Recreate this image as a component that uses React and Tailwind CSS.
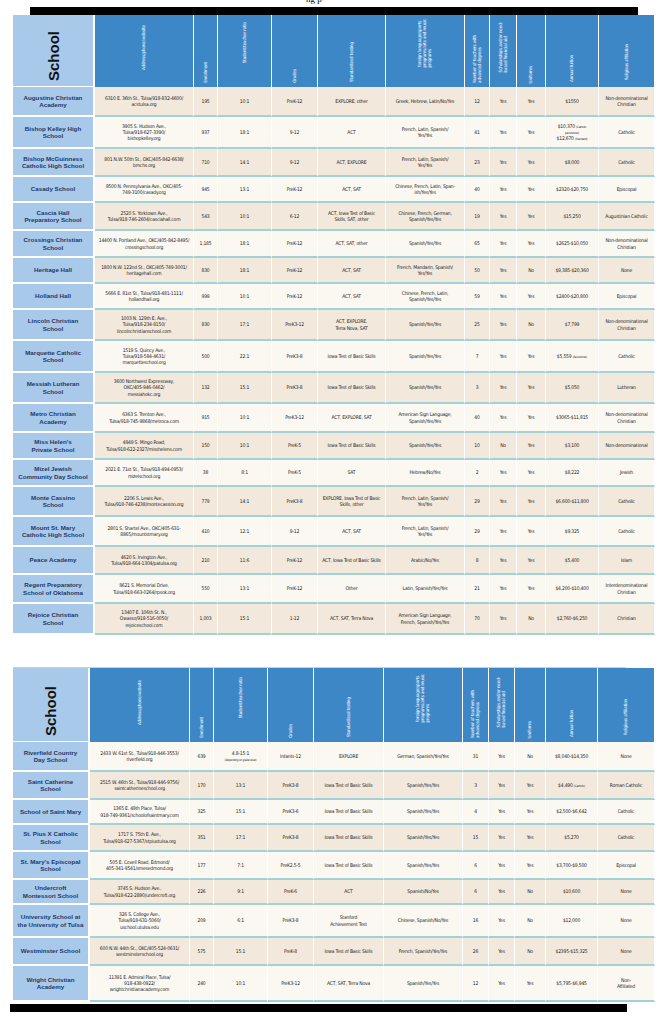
import React from "react";

const C = "bg-[#f2e9dc]";
const L = "bg-[#fbf8f2]";

const T1 = [
  { h: "h-[30px]", bg: C, name: "Augustine Christian\nAcademy", addr: "6310 E. 36th St., Tulsa/918-832-4600/\nacstulsa.org", en: "195", r: "10:1", g: "PreK-12", t: "EXPLORE, other", f: "Greek, Hebrew, Latin/No/Yes", n: "12", s: "Yes", u: "Yes", tu: "$1550", rel: "Non-denominational\nChristian" },
  { h: "h-[32px]", bg: L, name: "Bishop Kelley High\nSchool", addr: "3905 S. Hudson Ave.,\nTulsa/918-627-3390/\nbishopkelley.org", en: "937", r: "18:1", g: "9-12", t: "ACT", f: "French, Latin, Spanish/\nYes/Yes", n: "41", s: "Yes", u: "Yes", tu: "kelley", rel: "Catholic" },
  { h: "h-[28px]", bg: C, name: "Bishop McGuinness\nCatholic High School", addr: "801 N.W. 50th St., OKC/405-842-6638/\nbmchs.org", en: "710", r: "14:1", g: "9-12", t: "ACT, EXPLORE", f: "French, Latin, Spanish/\nYes/Yes", n: "23", s: "Yes", u: "Yes", tu: "$8,000", rel: "Catholic" },
  { h: "h-[26px]", bg: L, name: "Casady School", addr: "9500 N. Pennsylvania Ave., OKC/405-\n749-3100/casady.org", en: "945", r: "13:1", g: "PreK-12", t: "ACT, SAT", f: "Chinese, French, Latin, Span-\nish/Yes/Yes", n: "40", s: "Yes", u: "Yes", tu: "$2320-$20,750", rel: "Episcopal" },
  { h: "h-[28px]", bg: C, name: "Cascia Hall\nPreparatory School", addr: "2520 S. Yorktown Ave.,\nTulsa/918-746-2604/casciahall.com", en: "543", r: "10:1", g: "6-12", t: "ACT, Iowa Test of Basic\nSkills, SAT, other", f: "Chinese, French, German,\nSpanish/Yes/Yes", n: "19", s: "Yes", u: "Yes", tu: "$15,250", rel: "Augustinian Catholic" },
  { h: "h-[27px]", bg: L, name: "Crossings Christian\nSchool", addr: "14400 N. Portland Ave., OKC/405-842-8495/\ncrossingschool.org", en: "1,185", r: "18:1", g: "PreK-12", t: "ACT, SAT, other", f: "Spanish/Yes/Yes", n: "65", s: "Yes", u: "Yes", tu: "$2625-$10,050", rel: "Non-denominational\nChristian" },
  { h: "h-[26px]", bg: C, name: "Heritage Hall", addr: "1800 N.W. 122nd St., OKC/405-749-3001/\nheritagehall.com", en: "830", r: "18:1", g: "PreK-12", t: "ACT, SAT", f: "French, Mandarin, Spanish/\nYes/Yes", n: "50", s: "Yes", u: "No", tu: "$9,385-$20,360", rel: "None" },
  { h: "h-[26px]", bg: L, name: "Holland Hall", addr: "5666 E. 81st St., Tulsa/918-481-1111/\nhollandhall.org", en: "999", r: "10:1", g: "PreK-12", t: "ACT, SAT", f: "Chinese, French, Latin,\nSpanish/Yes/Yes", n: "59", s: "Yes", u: "Yes", tu: "$2400-$20,800", rel: "Episcopal" },
  { h: "h-[31px]", bg: C, name: "Lincoln Christian\nSchool", addr: "1003 N. 129th E. Ave.,\nTulsa/918-234-8150/\nlincolnchristianschool.com", en: "830", r: "17:1", g: "PreK3-12", t: "ACT, EXPLORE,\nTerra Nova, SAT", f: "Spanish/Yes/Yes", n: "25", s: "Yes", u: "No", tu: "$7,799", rel: "Non-denominational\nChristian" },
  { h: "h-[32px]", bg: L, name: "Marquette Catholic\nSchool", addr: "1519 S. Quincy Ave.,\nTulsa/918-584-4631/\nmarquetteschool.org", en: "500", r: "22:1", g: "PreK3-8", t: "Iowa Test of Basic Skills", f: "Spanish/Yes/Yes", n: "7", s: "Yes", u: "Yes", tu: "marquette", rel: "Catholic" },
  { h: "h-[31px]", bg: C, name: "Messiah Lutheran\nSchool", addr: "3600 Northwest Expressway,\nOKC/405-946-0462/\nmessiahokc.org", en: "132", r: "15:1", g: "PreK3-8", t: "Iowa Test of Basic Skills", f: "Spanish/Yes/Yes", n: "3", s: "Yes", u: "Yes", tu: "$5,050", rel: "Lutheran" },
  { h: "h-[29px]", bg: L, name: "Metro Christian\nAcademy", addr: "6363 S. Trenton Ave.,\nTulsa/918-745-9868/metroca.com", en: "915", r: "10:1", g: "PreK3-12", t: "ACT, EXPLORE, SAT", f: "American Sign Language,\nSpanish/Yes/Yes", n: "40", s: "Yes", u: "Yes", tu: "$3065-$11,815", rel: "Non-denominational\nChristian" },
  { h: "h-[27px]", bg: C, name: "Miss Helen's\nPrivate School", addr: "4949 S. Mingo Road,\nTulsa/918-622-2327/misshelens.com", en: "150", r: "10:1", g: "PreK-5", t: "Iowa Test of Basic Skills", f: "Spanish/Yes/Yes", n: "10", s: "No", u: "Yes", tu: "$3,100", rel: "Non-denominational" },
  { h: "h-[27px]", bg: L, name: "Mizel Jewish\nCommunity Day School", addr: "2021 E. 71st St., Tulsa/918-494-0953/\nmizelschool.org", en: "38", r: "8:1", g: "PreK-5", t: "SAT", f: "Hebrew/No/Yes", n: "2", s: "Yes", u: "Yes", tu: "$8,222", rel: "Jewish" },
  { h: "h-[30px]", bg: C, name: "Monte Cassino\nSchool", addr: "2206 S. Lewis Ave.,\nTulsa/918-746-4238/montecassino.org", en: "779", r: "14:1", g: "PreK3-8", t: "EXPLORE, Iowa Test of Basic\nSkills, other", f: "French, Latin, Spanish/\nYes/Yes", n: "29", s: "Yes", u: "Yes", tu: "$6,600-$11,800", rel: "Catholic" },
  { h: "h-[30px]", bg: L, name: "Mount St. Mary\nCatholic High School", addr: "2801 S. Shartel Ave., OKC/405-631-\n8865/mountstmary.org", en: "410", r: "12:1", g: "9-12", t: "ACT, SAT", f: "French, Latin, Spanish/\nYes/Yes", n: "29", s: "Yes", u: "Yes", tu: "$9,325", rel: "Catholic" },
  { h: "h-[28px]", bg: C, name: "Peace Academy", addr: "4620 S. Irvington Ave.,\nTulsa/918-664-1304/patulsa.org", en: "210", r: "11:6", g: "PreK-12", t: "ACT, Iowa Test of Basic Skills", f: "Arabic/No/Yes", n: "8", s: "Yes", u: "Yes", tu: "$5,400", rel: "Islam" },
  { h: "h-[29px]", bg: L, name: "Regent Preparatory\nSchool of Oklahoma", addr: "8621 S. Memorial Drive,\nTulsa/918-663-0264/rpsok.org", en: "550", r: "13:1", g: "PreK-12", t: "Other", f: "Latin, Spanish/Yes/Yes", n: "21", s: "Yes", u: "Yes", tu: "$4,200-$10,400", rel: "Interdenominational\nChristian" },
  { h: "h-[31px]", bg: C, name: "Rejoice Christian\nSchool", addr: "13407 E. 106th St. N.,\nOwasso/918-516-0050/\nrejoiceschool.com", en: "1,003", r: "15:1", g: "1-12", t: "ACT, SAT, Terra Nova", f: "American Sign Language,\nFrench, Spanish/Yes/Yes", n: "70", s: "Yes", u: "No", tu: "$2,760-$6,250", rel: "Christian" },
];

const T2 = [
  { h: "h-[30px]", bg: L, name: "Riverfield Country\nDay School", addr: "2433 W. 61st St., Tulsa/918-446-3553/\nriverfield.org", en: "639", r: "river", g: "Infants-12", t: "EXPLORE", f: "German, Spanish/Yes/Yes", n: "31", s: "Yes", u: "No", tu: "$8,040-$14,350", rel: "None" },
  { h: "h-[28px]", bg: C, name: "Saint Catherine\nSchool", addr: "2515 W. 46th St., Tulsa/918-446-9756/\nsaintcatherineschool.org", en: "170", r: "13:1", g: "PreK3-8", t: "Iowa Test of Basic Skills", f: "Spanish/Yes/Yes", n: "3", s: "Yes", u: "Yes", tu: "catherine", rel: "Roman Catholic" },
  { h: "h-[25px]", bg: L, name: "School of Saint Mary", addr: "1365 E. 49th Place, Tulsa/\n918-749-9361/schoolofsaintmary.com", en: "325", r: "15:1", g: "PreK3-6", t: "Iowa Test of Basic Skills", f: "Spanish/Yes/Yes", n: "4", s: "Yes", u: "Yes", tu: "$2,500-$6,642", rel: "Catholic" },
  { h: "h-[27px]", bg: C, name: "St. Pius X Catholic\nSchool", addr: "1717 S. 75th E. Ave.,\nTulsa/918-627-5367/stpiustulsa.org", en: "351", r: "17:1", g: "PreK3-8", t: "Iowa Test of Basic Skills", f: "Spanish/Yes/Yes", n: "15", s: "Yes", u: "Yes", tu: "$5,270", rel: "Catholic" },
  { h: "h-[28px]", bg: L, name: "St. Mary's Episcopal\nSchool", addr: "505 E. Covell Road, Edmond/\n405-341-9541/smesedmond.org", en: "177", r: "7:1", g: "PreK2.5-5", t: "Iowa Test of Basic Skills", f: "Spanish/Yes/Yes", n: "6", s: "Yes", u: "Yes", tu: "$3,700-$9,500", rel: "Episcopal" },
  { h: "h-[25px]", bg: C, name: "Undercroft\nMontessori School", addr: "3745 S. Hudson Ave.,\nTulsa/918-622-2890/undercroft.org", en: "226", r: "9:1", g: "PreK-6", t: "ACT", f: "Spanish/No/Yes", n: "6", s: "Yes", u: "No", tu: "$10,600", rel: "None" },
  { h: "h-[33px]", bg: L, name: "University School at\nthe University of Tulsa", addr: "326 S. College Ave.,\nTulsa/918-631-5060/\nuschool.utulsa.edu", en: "209", r: "6:1", g: "PreK3-8", t: "Stanford\nAchievement Test", f: "Chinese, Spanish/No/Yes", n: "16", s: "Yes", u: "No", tu: "$12,000", rel: "None" },
  { h: "h-[28px]", bg: C, name: "Westminster School", addr: "600 N.W. 44th St., OKC/405-524-0631/\nwestminsterschool.org", en: "575", r: "15:1", g: "PreK-8", t: "Iowa Test of Basic Skills", f: "French, Spanish/Yes/Yes", n: "26", s: "Yes", u: "No", tu: "$2395-$15,325", rel: "None" },
  { h: "h-[36px]", bg: L, name: "Wright Christian\nAcademy", addr: "11391 E. Admiral Place, Tulsa/\n918-438-0922/\nwrightchristianacademy.com", en: "240", r: "10:1", g: "PreK3-12", t: "ACT, SAT, Terra Nova", f: "Spanish/Yes/Yes", n: "12", s: "Yes", u: "Yes", tu: "$5,795-$6,945", rel: "Non-\nAffiliated" },
];

const HEAD = [
  { l: "Address/phone/website", pb: "pb-[17px]" },
  { l: "Enrollment", pb: "pb-[4px]" },
  { l: "Student/teacher ratio", pb: "pb-[24px]" },
  { l: "Grades", pb: "pb-[4px]" },
  { l: "Standardized testing", pb: "pb-[5px]" },
  { l: "Foreign language/sports\nprograms/arts and music\nprograms", pb: "pb-[20px]" },
  { l: "Number of teachers with\nadvanced degrees", pb: "pb-[4px]" },
  { l: "Scholarships and/or need-\nbased financial aid", pb: "pb-[15px]" },
  { l: "Uniforms", pb: "pb-[4px]" },
  { l: "Annual tuition", pb: "pb-[5px]" },
  { l: "Religious affiliation", pb: "pb-[7px]" },
];

const Small = ({ children }) => (
  <span className="text-[3px] leading-[4px]">{children}</span>
);

function special(v) {
  if (v === "kelley")
    return (
      <span>
        $10,370 <Small>(Catholic</Small>
        <br />
        <Small>parishioner)</Small>
        <br />
        $12,670 <Small>(Standard)</Small>
      </span>
    );
  if (v === "marquette")
    return (
      <span>
        $5,559 <Small>(Parishioner)</Small>
      </span>
    );
  if (v === "catherine")
    return (
      <span>
        $4,490 <Small>(Catholic)</Small>
      </span>
    );
  if (v === "river")
    return (
      <span>
        4.8-15:1
        <br />
        <Small>(Depending on grade level)</Small>
      </span>
    );
  return v;
}

const cellCls =
  "flex items-center justify-center text-center whitespace-pre px-[1px] overflow-hidden border-r border-r-white border-b-2 border-b-[#a2d2d8] text-[5px] leading-[6.2px] tracking-[-0.2px] text-[#1f1f1f]";

function Row({ row, cols }) {
  const vals = [row.addr, row.en, row.r, row.g, row.t, row.f, row.n, row.s, row.u, row.tu, row.rel];
  return (
    <div className={`grid ${cols} ${row.h} ${row.bg}`}>
      <div className="flex items-center justify-center text-center whitespace-pre-line bg-[#a8c9e9] border-r-2 border-r-white border-b-2 border-b-white text-[6.2px] leading-[7.5px] font-bold text-[#1e3868] [font-family:'Liberation_Sans',Arial,sans-serif]">
        {row.name}
      </div>
      {vals.map((v, i) => (
        <div key={i} className={cellCls}>
          {special(v)}
        </div>
      ))}
    </div>
  );
}

function Header({ cols, h }) {
  return (
    <div className={`grid ${cols} ${h}`}>
      <div className="flex items-end justify-center pb-[5px] bg-[#a8c9e9] border-r-2 border-r-white border-b border-b-white">
        <span className="[writing-mode:vertical-rl] rotate-180 text-[15px] leading-none font-bold text-[#111] [font-family:'Liberation_Sans',Arial,sans-serif]">
          School
        </span>
      </div>
      {HEAD.map((c, i) => (
        <div
          key={i}
          className={`flex items-end justify-center bg-[#3e87c7] border-r border-r-white ${c.pb}`}
        >
          <span className="[writing-mode:vertical-rl] rotate-180 whitespace-pre-line text-start text-[4.5px] leading-[5.2px] tracking-[-0.1px] text-white">
            {c.l}
          </span>
        </div>
      ))}
    </div>
  );
}

const COLS1 = "grid-cols-[82px_99px_24px_54px_46px_68px_79px_25px_27px_29px_53px_56px]";
const COLS2 = "grid-cols-[77px_100px_24px_54px_46px_70px_79px_26px_26px_31px_52px_57px]";

export default function App() {
  return (
    <div className="w-[665px] h-[1024px] overflow-hidden bg-white [font-family:'Liberation_Sans_Narrow','DejaVu_Sans_Condensed',sans-serif]">
      <div className="h-[7px] overflow-hidden">
        <div className="pl-[306px] -mt-[6px] text-[9px] leading-[10px] text-black [font-family:'Liberation_Serif',serif]">
          ng p
        </div>
      </div>
      <div className="ml-[13px] w-[642px]">
        <div className="ml-[17px] w-[608px] h-[8px] bg-black" />
        <Header cols={COLS1} h="h-[72px]" />
        {T1.map((r, i) => (
          <Row key={i} row={r} cols={COLS1} />
        ))}
      </div>
      <div className="h-[32px]" />
      <div className="ml-[13px] w-[642px]">
        <div className="w-[613px] h-px bg-[#cfcfcf]" />
        <Header cols={COLS2} h="h-[74px]" />
        {T2.map((r, i) => (
          <Row key={i} row={r} cols={COLS2} />
        ))}
        <div className="h-[2px]" />
        <div className="-ml-[3px] w-[617px] h-[8px] bg-black" />
      </div>
    </div>
  );
}
